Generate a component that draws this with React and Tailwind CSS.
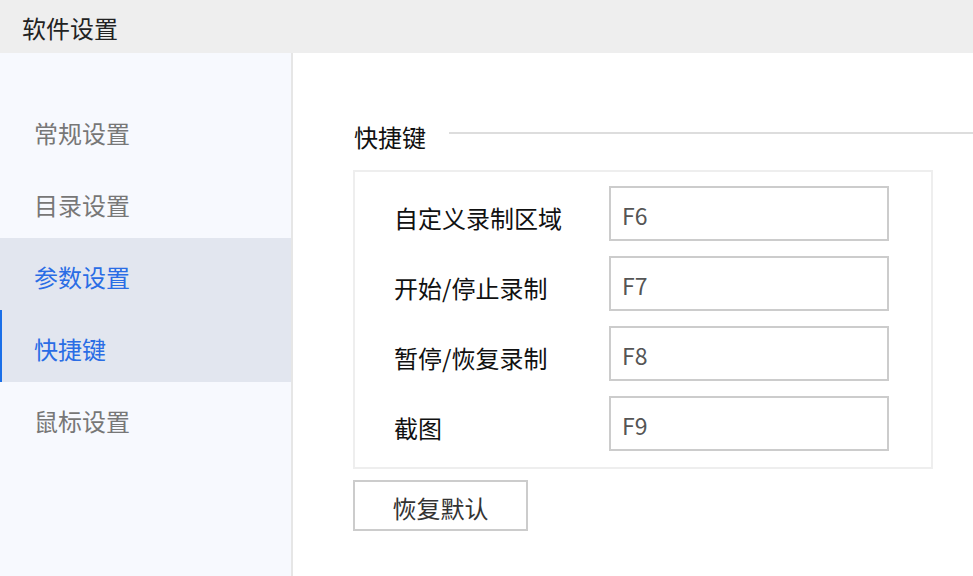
import { useState } from "react";

const NAV = ["常规设置", "目录设置", "参数设置", "快捷键", "鼠标设置"];

const SHORTCUTS = [
  { label: "自定义录制区域", key: "F6" },
  { label: "开始/停止录制", key: "F7" },
  { label: "暂停/恢复录制", key: "F8" },
  { label: "截图", key: "F9" },
];

export default function App() {
  const [active, setActive] = useState("快捷键");
  const hover = "参数设置";

  return (
    <div
      className="w-[973px] h-[576px] flex flex-col overflow-hidden bg-white"
      style={{ fontFamily: '"Noto Sans CJK SC", "Noto Sans", sans-serif' }}
    >
      <div className="h-[53px] shrink-0 bg-[#eeeeee] pl-[22px] pt-[2px] flex items-center text-[24px] text-[#222222]">
        软件设置
      </div>
      <div className="flex flex-1 min-h-0">
        <aside className="w-[293px] shrink-0 bg-[#f7f9fe] border-r-2 border-[#e6e6e6] pt-[41px]">
          {NAV.map((item) => {
            const isActive = item === active;
            const isHover = item === hover;
            return (
              <div
                key={item}
                onClick={() => setActive(item)}
                className={
                  "h-[72px] flex items-center pt-[5px] text-[24px] cursor-pointer " +
                  (isActive
                    ? "bg-[#e2e6ef] text-[#2a6de5] border-l-2 border-[#1a6fe8] pl-[32px]"
                    : isHover
                    ? "bg-[#e2e6ef] text-[#2a6de5] pl-[34px]"
                    : "text-[#777777] pl-[34px]")
                }
              >
                {item}
              </div>
            );
          })}
        </aside>
        <main className="flex-1 pl-[60px] pt-[67px]">
          <div className="flex items-center h-[28px]">
            <span className="ml-[1px] pt-[6px] text-[24px] text-[#111111] leading-none">快捷键</span>
            <div className="flex-1 ml-[23px] h-[2px] bg-[#dddddd] -mt-[2px]" />
          </div>
          <div className="mt-[22px] w-[580px] border-2 border-[#eeeeee] pt-[14px] pb-[16px] flex flex-col gap-[15px]">
            {SHORTCUTS.map((s) => (
              <div key={s.key} className="flex items-center">
                <div className="w-[254px] pl-[39px] pt-[8px] text-[24px] text-[#111111]">{s.label}</div>
                <div className="w-[280px] h-[55px] border-2 border-[#cccccc] flex items-center pl-[11px] pt-[3px] text-[23px] text-[#555555]">
                  {s.key}
                </div>
              </div>
            ))}
          </div>
          <button className="mt-[11px] w-[175px] h-[51px] border-2 border-[#cccccc] bg-white pt-[5px] text-[24px] text-[#333333] flex items-center justify-center">
            恢复默认
          </button>
        </main>
      </div>
    </div>
  );
}
